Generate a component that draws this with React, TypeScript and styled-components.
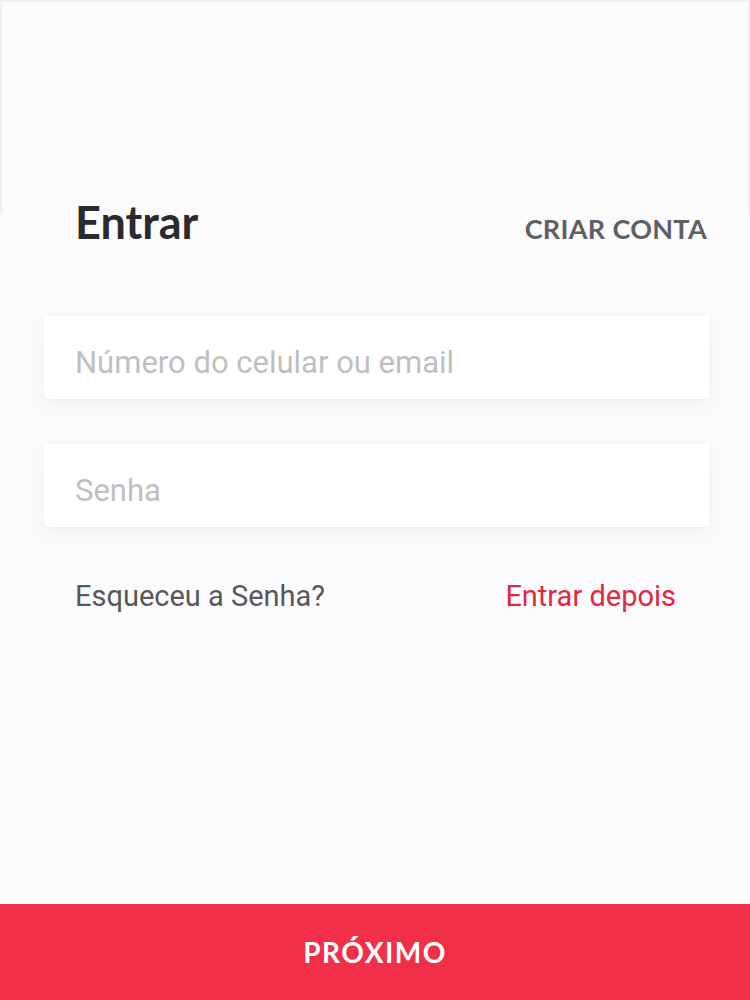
import React from "react";
import styled, { createGlobalStyle } from "styled-components";

const GlobalStyle = createGlobalStyle`
  html, body {
    margin: 0;
    padding: 0;
    background: #fcfbfc;
  }
  * {
    box-sizing: border-box;
  }
`;

const App = () => {
  return (
    <>
      <GlobalStyle />
      <StyledPage>
        <div className="header">
          <h1 className="header__title">Entrar</h1>
          <a className="header__link">CRIAR CONTA</a>
        </div>

        <form className="form" onSubmit={(e) => e.preventDefault()}>
          <StyledInput type="text" placeholder="Número do celular ou email" />
          <StyledInput type="password" placeholder="Senha" />
        </form>

        <div className="links">
          <StyledLink>Esqueceu a Senha?</StyledLink>
          <StyledLink $accent>Entrar depois</StyledLink>
        </div>

        <div className="spacer" />

        <StyledButton type="button">PRÓXIMO</StyledButton>
      </StyledPage>
    </>
  );
};

const StyledPage = styled.div`
  position: relative;
  min-height: 100vh;
  display: flex;
  flex-direction: column;
  background: #fcfbfc;

  &::before {
    content: "";
    position: absolute;
    top: 0;
    left: 0;
    right: 0;
    height: 212px;
    border: 2px solid #efeff1;
    border-bottom: none;
    pointer-events: none;
  }

  .header {
    display: flex;
    justify-content: space-between;
    align-items: baseline;
    padding: 197px 43px 0 75px;

    &__title {
      margin: 0;
      font-family: "Lato", "Open Sans", sans-serif;
      font-weight: 700;
      font-size: 45px;
      line-height: 50px;
      color: #2b2b2f;
    }

    &__link {
      font-family: "Lato", "Open Sans", sans-serif;
      font-weight: 700;
      font-size: 27px;
      letter-spacing: 0.3px;
      color: #5f6066;
      cursor: pointer;
    }
  }

  .form {
    display: flex;
    flex-direction: column;
    gap: 45px;
    margin: 69px 41px 0 44px;
  }

  .links {
    display: flex;
    justify-content: space-between;
    align-items: baseline;
    padding: 52px 74px 0 75px;
  }

  .spacer {
    flex: 1;
  }
`;

const StyledInput = styled.input`
  height: 83px;
  width: 100%;
  border: none;
  border-radius: 4px;
  background: #ffffff;
  box-shadow: 0 6px 20px rgba(40, 40, 60, 0.06), 0 1px 3px rgba(40, 40, 60, 0.03);
  padding: 9px 0 0 31px;
  font-family: "Roboto", "Noto Sans", sans-serif;
  font-size: 31px;
  color: #333;
  outline: none;

  &::placeholder {
    color: #bfbfc2;
  }
`;

const StyledLink = styled.a<{ $accent?: boolean }>`
  font-family: "Roboto", "Noto Sans", sans-serif;
  font-size: 29px;
  color: ${(p) => (p.$accent ? "#e2283f" : "#58585c")};
  cursor: pointer;
`;

const StyledButton = styled.button`
  height: 96px;
  width: 100%;
  border: none;
  background: #f22f48;
  color: #ffffff;
  font-family: "Lato", "Open Sans", sans-serif;
  font-weight: 700;
  font-size: 28px;
  letter-spacing: 1.5px;
  cursor: pointer;
`;

export default App;
